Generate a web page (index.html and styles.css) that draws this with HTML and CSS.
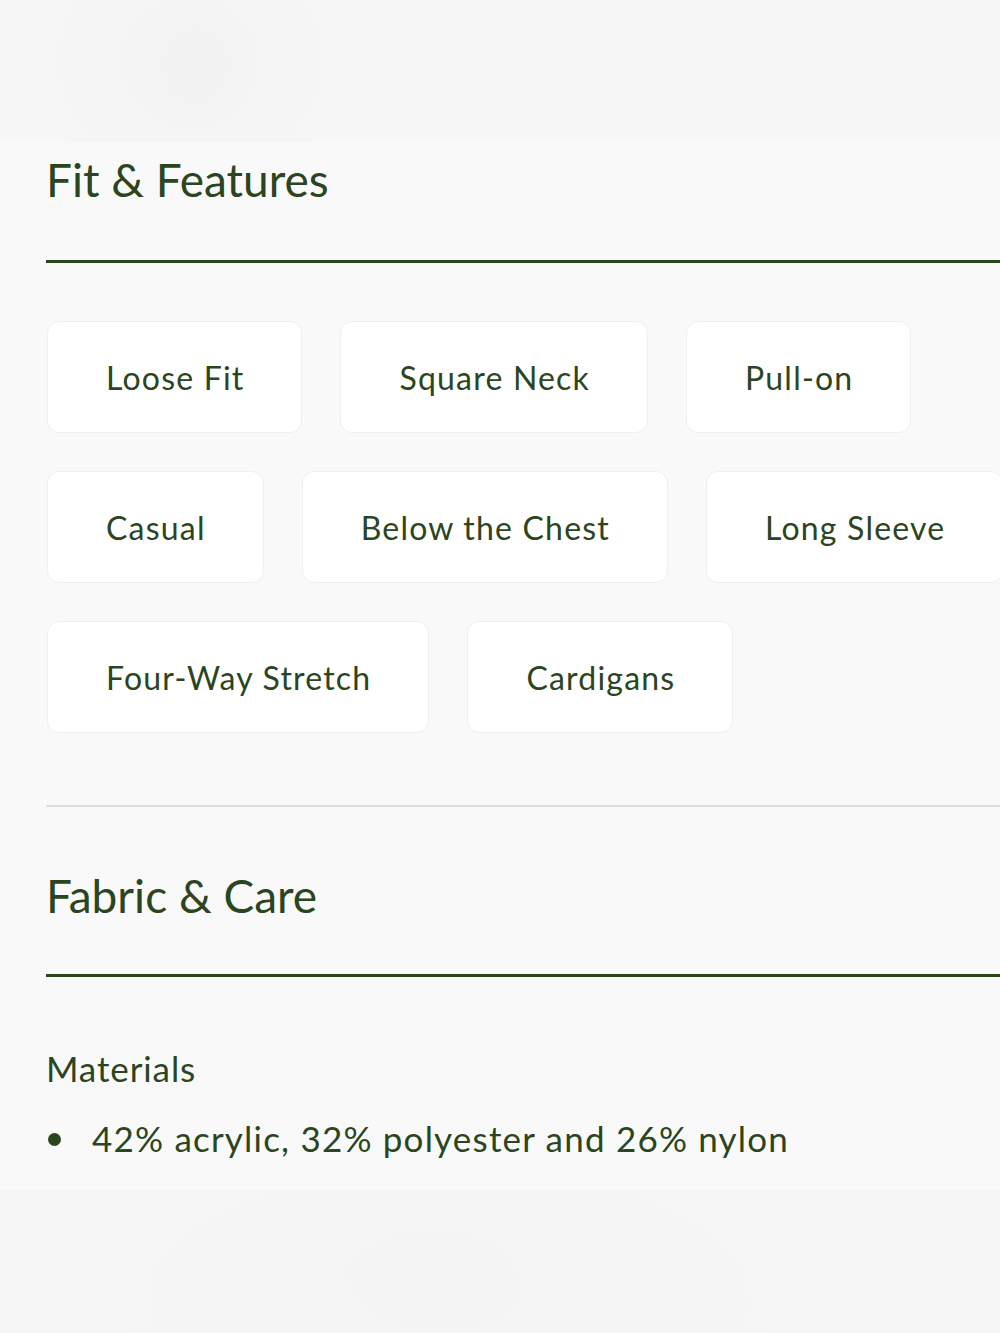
FILE: index.html
```html
<!DOCTYPE html>
<html lang="en">
<head>
<meta charset="utf-8">
<title>Fit &amp; Features</title>
<link rel="stylesheet" href="styles.css">
</head>
<body>
<div class="hero-blur"></div>
<main class="details">
  <section class="section">
    <h2 class="section-title">Fit &amp; Features</h2>
    <div class="rule"></div>
    <ul class="chips">
      <li class="chip">Loose Fit</li>
      <li class="chip">Square Neck</li>
      <li class="chip">Pull-on</li>
      <li class="chip">Casual</li>
      <li class="chip">Below the Chest</li>
      <li class="chip">Long Sleeve</li>
      <li class="chip">Four-Way Stretch</li>
      <li class="chip">Cardigans</li>
    </ul>
  </section>
  <div class="divider"></div>
  <section class="section">
    <h2 class="section-title">Fabric &amp; Care</h2>
    <div class="rule"></div>
    <h3 class="sub-title">Materials</h3>
    <ul class="bullets">
      <li>42% acrylic, 32% polyester and 26% nylon</li>
    </ul>
  </section>
</main>
<div class="foot-blur"></div>
</body>
</html>
```
FILE: styles.css
```css
html, body {
  margin: 0;
  padding: 0;
  overflow: hidden;
  background: #f9f9f9;
}
body {
  width: 1000px;
  height: 1333px;
  font-family: Lato, "Noto Sans", sans-serif;
  color: #2a4520;
}
.hero-blur {
  height: 142px;
  background:
    radial-gradient(ellipse 60px 70px at 195px 65px, #f2f2f2 0%, #f3f3f3 60%, rgba(243,243,243,0) 100%),
    radial-gradient(ellipse 170px 150px at 190px 60px, #f3f3f3 0%, rgba(244,244,244,0.6) 70%, rgba(246,246,246,0) 100%),
    linear-gradient(#f7f7f7, #f7f7f7);
}
.details {
  width: 1010px;
  padding-left: 46px;
}
.section-title {
  box-sizing: border-box;
  margin: 0;
  font-weight: 400;
  font-size: 46px;
  line-height: 1;
  padding-top: 15px;
  height: 118px;
}
.rule {
  height: 3px;
  background: #2b451f;
}
.chips {
  list-style: none;
  margin: 0;
  padding: 58px 0 0 1px;
  display: flex;
  flex-wrap: wrap;
  gap: 38px 38px;
}
.chip {
  box-sizing: border-box;
  background: #ffffff;
  border: 1px solid #efefef;
  border-radius: 12px;
  height: 112px;
  padding: 0 57px 0 58px;
  display: flex;
  align-items: center;
  font-size: 32px;
  letter-spacing: 1.2px;
}
.divider {
  margin-top: 72px;
  height: 2px;
  background: #dcdcdc;
}
.section + .divider + .section .section-title {
  padding-top: 66px;
  height: 167px;
}
.sub-title {
  margin: 70px 0 0;
  font-weight: 400;
  font-size: 35px;
  line-height: 42px;
  letter-spacing: 0.9px;
}
.bullets {
  list-style: none;
  margin: 28px 0 0;
  padding: 0;
  font-size: 35px;
  line-height: 42px;
  letter-spacing: 1.2px;
}
.bullets li {
  display: flex;
  align-items: center;
}
.bullets li::before {
  content: "";
  width: 13px;
  height: 13px;
  border-radius: 50%;
  background: #2a4520;
  margin: 3px 31px 0 2px;
  flex: none;
}
.foot-blur {
  position: absolute;
  left: 0;
  right: 0;
  top: 1190px;
  height: 143px;
  background:
    radial-gradient(ellipse 110px 60px at 430px 85px, #f3f3f3 0%, rgba(244,244,244,0) 100%),
    radial-gradient(ellipse 360px 160px at 450px 110px, #f4f4f4 0%, rgba(245,245,245,0) 100%),
    linear-gradient(#f6f6f6, #f6f6f6);
}
```
